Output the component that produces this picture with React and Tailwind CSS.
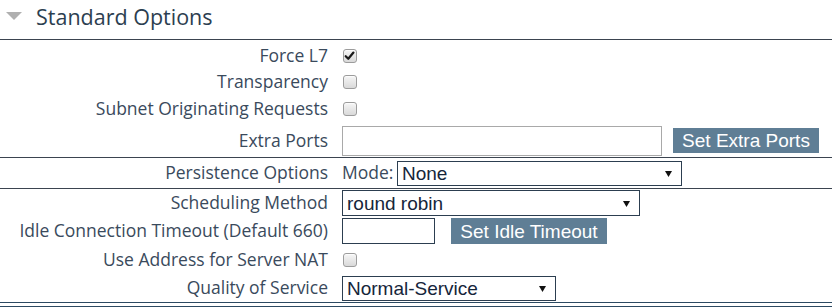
import React from "react";

const labelFont = { fontFamily: '"Open Sans", "Noto Sans", sans-serif' };
const ctlFont = { fontFamily: '"Liberation Sans", Arial, sans-serif' };

function Checkbox({ checked }) {
  return (
    <div className="relative w-[14px] h-[14px] rounded-[3px] border border-[#9c9c9c] bg-gradient-to-b from-[#f6f6f6] to-[#d9d9d9] shadow-[inset_0_1px_1px_rgba(255,255,255,0.8)]">
      {checked && (
        <svg viewBox="0 0 14 14" className="absolute left-[0px] top-[0px] w-[12px] h-[12px]">
          <path d="M2 7.2 L5 10.2 L11 3" fill="none" stroke="#1a1a1a" strokeWidth="2.6" strokeLinecap="round" strokeLinejoin="round" />
        </svg>
      )}
    </div>
  );
}

function Select({ value, width, height }) {
  return (
    <div
      className="flex items-center justify-between border border-[#2c3e50] bg-white pl-[4px] pr-[9px] text-[19px] text-[#15253a]"
      style={{ width, height, ...ctlFont }}
    >
      <span className="leading-none">{value}</span>
      <svg width="7" height="7" viewBox="0 0 7 7">
        <path d="M0 1 L7 1 L3.5 7 Z" fill="#111" />
      </svg>
    </div>
  );
}

function Button({ children, width, height }) {
  return (
    <div
      className="flex items-center justify-center bg-[#5f7e95] text-white text-[19px] leading-none"
      style={{ width, height, ...ctlFont }}
    >
      {children}
    </div>
  );
}

function Row({ label, h, children, className = "" }) {
  return (
    <div className={`flex items-center ${className}`} style={{ height: h }}>
      <div className="w-[328px] shrink-0 whitespace-nowrap text-right text-[17.5px] text-[#3a4a5c] leading-none" style={labelFont}>
        {label}
      </div>
      <div className="ml-[14px] flex items-center">{children}</div>
    </div>
  );
}

export default function App() {
  return (
    <div className="w-[832px] h-[308px] bg-white overflow-hidden">
      <div className="h-[40px] border-b border-[#3b4450] flex items-center">
        <svg width="16" height="9" viewBox="0 0 16 9" className="ml-[6px] mt-[-6px]">
          <path d="M0 0 L16 0 L8 8 Z" fill="#b0b0b0" />
        </svg>
        <span className="ml-[14px] text-[21.5px] text-[#2c3e50] leading-none mt-[-6px]" style={labelFont}>
          Standard Options
        </span>
      </div>
      <div className="pt-[2px]">
        <Row label="Force L7" h={28}>
          <div className="ml-[1px]"><Checkbox checked /></div>
        </Row>
        <Row label="Transparency" h={24}>
          <div className="ml-[1px]"><Checkbox /></div>
        </Row>
        <Row label="Subnet Originating Requests" h={30}>
          <div className="ml-[1px]"><Checkbox /></div>
        </Row>
        <Row label="Extra Ports" h={34} className="border-b border-[#3b4450]">
          <div className="w-[320px] h-[30px] border border-[#a9a9a9] bg-white" />
          <div className="ml-[11px]">
            <Button width={146} height={25}>Set Extra Ports</Button>
          </div>
        </Row>
        <Row label="Persistence Options" h={31} className="border-b border-[#3b4450]">
          <span className="w-[55px] text-[17.5px] text-[#3a4a5c] leading-none" style={labelFont}>Mode:</span>
          <Select value="None" width={285} height={25} />
        </Row>
        <Row label="Scheduling Method" h={28}>
          <Select value="round robin" width={298} height={26} />
        </Row>
        <Row label="Idle Connection Timeout (Default 660)" h={28}>
          <div className="w-[93px] h-[26px] border border-[#2c3e50] bg-white" />
          <div className="ml-[16px]">
            <Button width={156} height={26}>Set Idle Timeout</Button>
          </div>
        </Row>
        <Row label="Use Address for Server NAT" h={29}>
          <div className="ml-[1px]"><Checkbox /></div>
        </Row>
        <Row label="Quality of Service" h={28}>
          <Select value="Normal-Service" width={214} height={25} />
        </Row>
        <div className="h-[5px] border-y border-[#2c4a62]" />
      </div>
    </div>
  );
}
